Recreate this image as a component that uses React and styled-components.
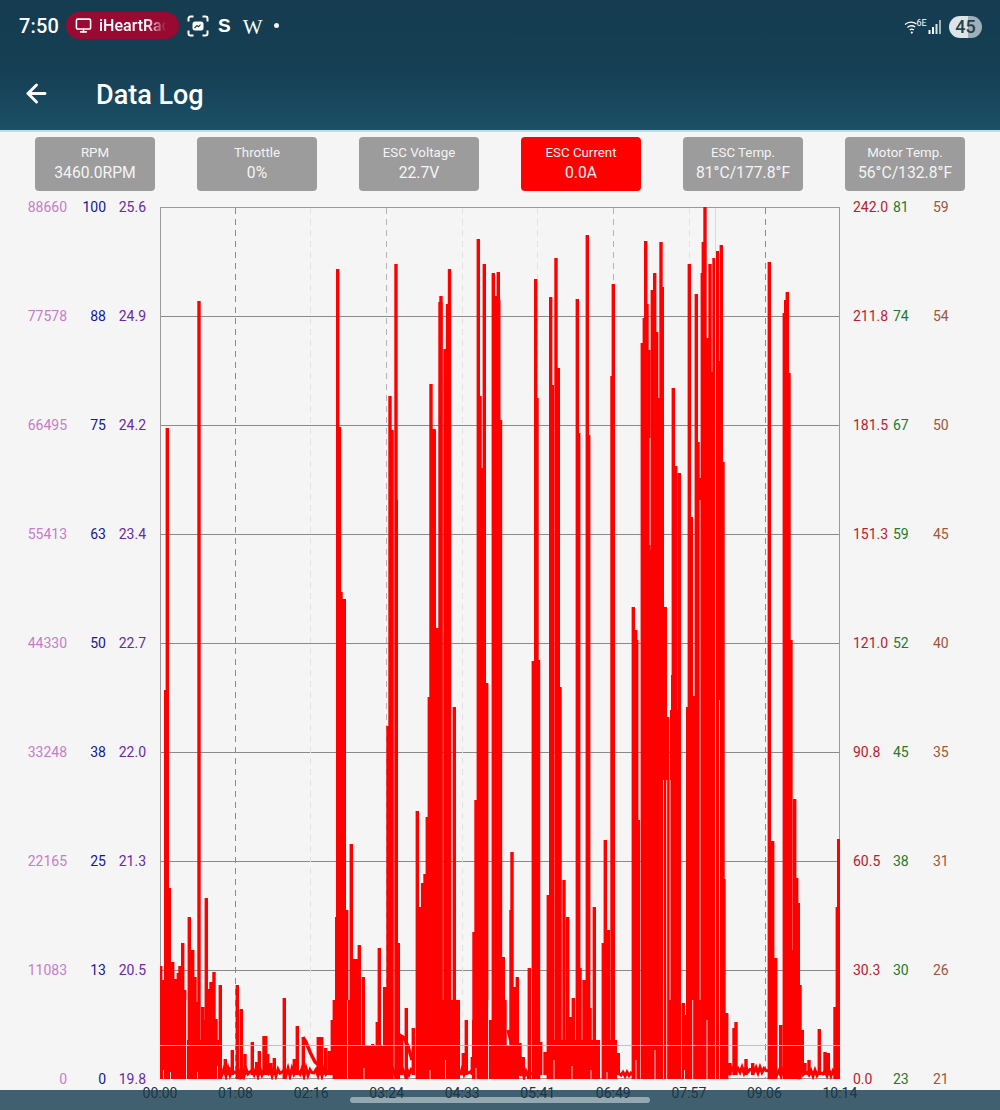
import React from 'react'
import styled, { createGlobalStyle } from 'styled-components'
import { ArrowLeft, Monitor } from 'lucide-react'

const GlobalStyle = createGlobalStyle`
  html, body {
    margin: 0;
    padding: 0;
    background: #f5f5f5;
  }
  * {
    box-sizing: border-box;
  }
`

const Page = styled.div`
  width: 1000px;
  height: 1110px;
  display: flex;
  flex-direction: column;
  overflow: hidden;
  background: #f5f5f5;
  font-family: Roboto, "Liberation Sans", sans-serif;
`

const Header = styled.header`
  height: 132px;
  flex: none;
  background: linear-gradient(180deg, #153c50 0%, #163f54 55%, #1b5066 100%);
  border-bottom: 2px solid #b9dfe8;
  color: #fff;
`

const StatusBar = styled.div`
  height: 52px;
  padding: 12px 18px 0 19px;
  display: flex;
  align-items: flex-start;
  justify-content: space-between;
`

const StatusLeft = styled.div`
  display: flex;
  align-items: center;
  height: 27px;
`

const StatusRight = styled.div`
  display: flex;
  align-items: center;
  height: 27px;
  margin-top: 1px;
`

const Clock = styled.span`
  font-size: 20px;
  font-weight: 500;
  width: 47px;
  letter-spacing: 0.2px;
`

const CallPill = styled.div`
  width: 113px;
  height: 27px;
  border-radius: 14px;
  background: #990a33;
  display: flex;
  align-items: center;
  padding-left: 9px;
  gap: 7px;
  font-size: 16px;
  font-weight: 500;
`

const PillText = styled.span`
  width: 67px;
  overflow: hidden;
  white-space: nowrap;
  -webkit-mask-image: linear-gradient(90deg, #000 72%, transparent 100%);
  mask-image: linear-gradient(90deg, #000 72%, transparent 100%);
`

const NoticeIcon = styled.svg`
  margin-left: 8px;
  display: block;
`

const NoticeLetter = styled.span`
  font-family: ${(p) => p.$family};
  font-size: ${(p) => p.$size}px;
  font-weight: ${(p) => p.$weight};
  margin-left: ${(p) => p.$gap}px;
  margin-top: ${(p) => p.$drop}px;
`

const NoticeDot = styled.span`
  width: 5px;
  height: 5px;
  border-radius: 50%;
  background: #eef3f5;
  margin-left: 11px;
`

const Battery = styled.div`
  width: 33px;
  height: 22px;
  border-radius: 11px;
  margin-left: 5px;
  background: linear-gradient(90deg, #dde4e7 0 58%, #9fb0b8 58% 100%);
  color: #24414f;
  font-size: 18px;
  font-weight: 500;
  line-height: 22px;
  text-align: center;
`

const AppBar = styled.div`
  height: 78px;
  display: flex;
  align-items: center;
  padding: 5px 0 0 22px;
`

const Title = styled.h1`
  margin: 2px 0 0 45px;
  font-size: 27px;
  font-weight: 500;
  line-height: 32px;
`

const MetricRow = styled.div`
  display: flex;
  justify-content: space-between;
  padding: 0 35px;
  margin-top: 5px;
  flex: none;
`

const Metric = styled.div`
  width: 120px;
  height: 54px;
  border-radius: 4px;
  background: ${(p) => (p.$active ? '#ff0000' : '#9c9c9c')};
  color: #f4f4f4;
  display: flex;
  flex-direction: column;
  align-items: center;
  padding-top: 7px;
`

const MetricLabel = styled.span`
  font-size: 13.3px;
  line-height: 18px;
`

const MetricValue = styled.span`
  font-size: 15.7px;
  line-height: 22px;
  white-space: nowrap;
`

const ChartRow = styled.div`
  display: flex;
  height: 872px;
  margin-top: 16px;
  flex: none;
`

const AxisGroup = styled.div`
  display: flex;
  width: ${(p) => p.$width}px;
  flex: none;
`

const Axis = styled.div`
  width: ${(p) => p.$width}px;
  flex: none;
  display: flex;
  flex-direction: column;
  justify-content: space-between;
  color: ${(p) => p.$color};
  font-size: 14px;
  text-align: ${(p) => p.$align};
`

const Tick = styled.span`
  display: block;
  height: 0;
  line-height: 0;
`

const ChartSvg = styled.svg`
  width: 680px;
  height: 873px;
  flex: none;
  display: block;
`

const TimeAxis = styled.div`
  width: 680px;
  height: 11px;
  margin-left: 160px;
  flex: none;
  display: flex;
  justify-content: space-between;
  position: relative;
  z-index: 1;
`

const TimeTick = styled.span`
  width: 0;
  height: 0;
  margin-top: 14px;
  display: flex;
  justify-content: center;
  line-height: 0;
  font-size: 14px;
  color: #1e3644;
`

const NavBar = styled.div`
  height: 20px;
  flex: none;
  background: #41606f;
  display: flex;
  justify-content: center;
  padding-top: 7px;
`

const NavHandle = styled.div`
  width: 300px;
  height: 6px;
  border-radius: 3px;
  background: #94a8b2;
`

const metrics = [
  { label: 'RPM', value: '3460.0RPM' },
  { label: 'Throttle', value: '0%' },
  { label: 'ESC Voltage', value: '22.7V' },
  { label: 'ESC Current', value: '0.0A', active: true },
  { label: 'ESC Temp.', value: '81°C/177.8°F' },
  { label: 'Motor Temp.', value: '56°C/132.8°F' },
]

const leftAxes = [
  { width: 67, color: '#c77ccb', ticks: ['88660', '77578', '66495', '55413', '44330', '33248', '22165', '11083', '0'] },
  { width: 39, color: '#17179a', ticks: ['100', '88', '75', '63', '50', '38', '25', '13', '0'] },
  { width: 40, color: '#6a2aa6', ticks: ['25.6', '24.9', '24.2', '23.4', '22.7', '22.0', '21.3', '20.5', '19.8'] },
]

const rightAxes = [
  { width: 40, color: '#b8202c', ticks: ['242.0', '211.8', '181.5', '151.3', '121.0', '90.8', '60.5', '30.3', '0.0'] },
  { width: 40, color: '#1f7a2c', ticks: ['81', '74', '67', '59', '52', '45', '38', '30', '23'] },
  { width: 40, color: '#a0563c', ticks: ['59', '54', '50', '45', '40', '35', '31', '26', '21'] },
]

const times = ['00:00', '01:08', '02:16', '03:24', '04:33', '05:41', '06:49', '07:57', '09:06', '10:14']

const gridYs = [316.5, 425.5, 534.5, 643.5, 752.5, 861.5, 970.5]

const dashed = [
  { x: 235.5, color: '#8a8a8a' },
  { x: 310.5, color: '#e2e2e2' },
  { x: 386.5, color: '#b4b4b4' },
  { x: 462.5, color: '#e2e2e2' },
  { x: 537.5, color: '#e2e2e2' },
  { x: 613.5, color: '#b4b4b4' },
  { x: 689.5, color: '#e2e2e2' },
  { x: 765.5, color: '#8a8a8a' },
]

// [x, top of the spike] in page pixels
const spikes = [
  [160.7, 966], [162.7, 980], [165.7, 690], [167.3, 428], [169.3, 888], [172.7, 962], [176, 979], [178.3, 973],
  [180, 966], [182.7, 943], [184.7, 990], [189.3, 917], [192.7, 950], [195, 977], [197.3, 1002], [199, 301],
  [202.7, 1007], [206.3, 898], [209, 989], [211, 982], [214, 972], [216, 1019], [220.3, 985], [225.3, 1059],
  [228.7, 1067], [232.3, 1050], [237.3, 985], [241.3, 1009], [245, 1054], [252.3, 1042], [256.7, 1062],
  [259.3, 1051], [264, 1036], [265.7, 1036], [267.7, 1054], [270.7, 1063], [274.3, 1058], [284.3, 998],
  [294.3, 1059], [297.3, 1026], [303.3, 1037], [318.3, 1037], [321.7, 1037], [325.7, 1048],
  [329.3, 1051], [332.3, 1020], [334.3, 1000], [336.7, 917], [337.7, 269], [339.5, 427], [341, 592], [344.3, 599],
  [346.7, 910], [351.3, 844], [354, 959], [356, 959], [359.3, 945], [363.3, 977], [369.3, 1050], [372.7, 1044],
  [377.3, 1022], [379.3, 948], [384.7, 987], [388, 726], [390, 396], [392, 430], [396, 264], [398.3, 943],
  [401.7, 1035], [406.3, 1008], [413.3, 1028], [417.3, 811], [420.7, 907], [422.7, 883], [425, 874], [427.3, 817],
  [429.3, 697], [431, 384], [434, 429], [436.7, 628], [440, 302], [441, 296], [445, 349], [447.5, 304], [449.5, 269],
  [454.3, 707], [457.3, 1018], [463.3, 1053], [466.3, 1020], [472.3, 1057], [474, 932], [476, 800], [478.3, 239],
  [480, 396], [482, 468], [484.3, 264], [486.7, 683], [493.3, 273], [495.7, 296], [498.3, 272], [500.5, 420],
  [503.3, 957], [505, 1000], [511, 910], [512, 852], [514, 987], [517.3, 977], [520, 1043], [523.3, 1057],
  [529.3, 968], [533.3, 661], [535.7, 279], [537, 398], [538.5, 660], [540.7, 1042], [545, 1052], [548.3, 895],
  [550.7, 297], [552.3, 385], [556, 258], [558.3, 368], [560, 687], [564, 880], [567.7, 917], [570.7, 1017],
  [573.3, 998], [577.3, 299], [578.7, 433], [580, 968], [584, 980], [587.3, 235], [588.7, 435], [590, 1008],
  [594.3, 907], [598.3, 1063], [603.3, 943], [605.3, 840], [608.3, 930], [612, 376], [613.3, 284], [615, 1048],
  [618.3, 1053], [633.3, 607], [635.7, 630], [636.7, 640], [642.3, 343], [644.3, 318], [645.7, 241], [647, 304],
  [648.7, 350], [652.3, 290], [654.7, 273], [656.7, 332], [658.7, 450], [660, 398], [661, 242], [662.3, 287],
  [665.3, 607], [667.7, 717], [668.7, 780], [672.7, 675], [673.3, 388], [675.7, 466], [677.7, 710], [679.3, 473],
  [683.3, 1003], [685, 1015], [689.3, 264], [691.3, 517], [693.7, 696], [696.3, 294], [698, 442], [699.3, 478],
  [702.3, 273], [703.3, 242], [705, 207], [707.7, 338], [710, 264], [712, 468], [714, 258], [717.3, 251], [719, 361],
  [721.3, 245], [723, 462], [724, 879], [726.7, 1013], [730, 1063], [734, 1028], [736, 1022], [746, 1059],
  [752.7, 1063], [769.3, 262], [772.7, 841], [775.7, 958], [780.7, 1025], [784.3, 313], [785.7, 300], [787.3, 292],
  [789, 373], [791, 640], [794.7, 799], [796.7, 878], [798.3, 903], [800, 985], [802.3, 1030], [805, 1063],
  [809, 1060], [819.3, 1029], [825, 1052], [828.3, 1053], [835, 1007], [837.3, 907], [838.7, 839],
]

// solid parts of the trace, where the line is too dense to tell apart: [from x, to x, top]
const blocks = [
  [160, 222, 1040], [161, 166, 1000], [168, 171, 950], [176, 186, 1000], [189, 196, 990], [203, 209, 1020],
  [337, 341, 590], [336, 346, 790], [335, 385, 1045], [346, 360, 1000], [387, 392, 726], [395, 398, 500],
  [417, 460, 1000], [427, 438, 817], [429, 437, 700], [431, 436, 430], [439, 442.5, 302], [444, 451, 349],
  [472, 500, 1020], [479, 486, 540], [492, 500.5, 300],
  [500, 515, 1045], [533, 540, 960], [534, 538, 400], [548, 600, 1040], [549.5, 553, 385], [555, 560, 368],
  [577, 580, 433], [586, 590, 435], [602, 617, 1040], [611, 615, 376],
  [632, 640, 990], [634, 640, 820], [641, 663, 550], [664, 669, 810], [670, 681, 710],
  [686, 700, 707], [701, 723, 372], [770, 775, 960], [784, 792, 880], [792, 798, 950],
]

// pale slits left between neighbouring strokes: [x, from y, to y]
const slits = [
  [163.5, 1070, 1079], [170.5, 1072, 1079], [186.5, 1000, 1079], [197.5, 1072, 1079], [217.5, 1066, 1079],
  [650, 438, 545], [663.5, 780, 1079], [666.7, 780, 1079], [670, 780, 1000], [692.7, 1000, 1079], [700, 500, 1000],
  [707, 1020, 1079], [719.5, 700, 1079], [636, 1060, 1079], [655, 1050, 1079], [684.5, 1070, 1079],
  [347.5, 1000, 1079], [445.5, 1060, 1079], [488.5, 1000, 1079], [364, 1068, 1079], [430, 1070, 1079],
  [476, 1068, 1079], [554, 1060, 1079], [572, 1066, 1079], [591, 1070, 1079], [607, 1072, 1079],
]

// stretches where the throttle idles: [from x, to x, mid y, swing]
const idleRanges = [
  [218, 332, 1072, 4], [383, 416, 1072, 3], [460, 476, 1072, 3], [520, 532, 1074, 3],
  [617, 633, 1074, 2], [724, 770, 1070, 3], [775, 836, 1073, 3],
]

const idlePoints = ([from, to, mid, swing]) => {
  const points = []
  for (let x = from; x <= to; x += 2) {
    points.push(`${x},${(mid + swing * Math.sin(x * 1.37)).toFixed(1)}`)
  }
  return points.join(' ')
}

// tails that decay after a burst
const tails = [
  '303,1037 306,1042 310,1052 315,1062 322,1068',
  '398,1034 404,1038 408,1046 412,1060',
  '508,1030 512,1045 518,1052 524,1068',
]

const tracePath = spikes
  .map(([x, top]) => `M${x} ${top}V${top < 1020 ? 1079 : 1075}`)
  .join('')

const ScreenshotIcon = () => (
  <NoticeIcon width="22" height="22" viewBox="0 0 22 22" fill="none" stroke="#fff" strokeWidth="2">
    <path d="M1.5 6.5V3.5a2 2 0 0 1 2-2h3M15.5 1.5h3a2 2 0 0 1 2 2v3M20.5 15.5v3a2 2 0 0 1-2 2h-3M6.5 20.5h-3a2 2 0 0 1-2-2v-3" />
    <rect x="5.5" y="6.5" width="11" height="9" rx="2.5" fill="#fff" stroke="none" />
    <path d="M7.5 13l2.5-2.5 1.5 1.2 2-2" stroke="#163f54" strokeWidth="1.2" />
  </NoticeIcon>
)

const WifiIcon = () => (
  <svg width="24" height="18" viewBox="0 0 24 18" fill="none" stroke="#fff" strokeWidth="1.3">
    <path d="M1 6.5c3.4-3 8.2-3 11.5-.4M3.4 9.4c2.4-2 5.4-2 7.8-.4M5.7 12c1.2-1 2.9-1 4.1 0" />
    <circle cx="7.8" cy="14.6" r="1.1" fill="#fff" stroke="none" />
    <text x="12.5" y="8" fontFamily="Roboto, sans-serif" fontSize="9" fill="#fff" stroke="none">6E</text>
  </svg>
)

const SignalIcon = () => (
  <svg width="16" height="16" viewBox="0 0 16 16" fill="#fff">
    <rect x="0.5" y="11" width="2" height="4" />
    <rect x="4" y="8" width="2" height="7" />
    <rect x="7.5" y="5" width="2" height="10" opacity="0.85" />
    <rect x="11" y="1" width="2" height="14" opacity="0.6" />
  </svg>
)

const Chart = () => (
  <ChartSvg viewBox="160 207 680 873">
    {gridYs.map((y) => (
      <line key={y} x1="160" x2="840" y1={y} y2={y} stroke="#8a8a8a" strokeWidth="1" />
    ))}
    {dashed.map((d) => (
      <line key={d.x} x1={d.x} x2={d.x} y1="208" y2="1079" stroke={d.color} strokeWidth="1" strokeDasharray="6 5" />
    ))}
    <line x1="160" x2="840" y1="1078.5" y2="1078.5" stroke="#9a9a9a" strokeWidth="1" />
    <rect x="160.5" y="207.5" width="679" height="871" fill="none" stroke="#9a9a9a" strokeWidth="1" />
    <path d={tracePath} fill="none" stroke="#ff0000" strokeWidth="3.4" />
    {blocks.map(([x1, x2, top]) => (
      <rect key={`${x1}-${top}`} x={x1} y={top} width={x2 - x1} height={1079 - top} fill="#ff0000" />
    ))}
    {idleRanges.map((r) => (
      <polyline key={r[0]} points={idlePoints(r)} fill="none" stroke="#ff0000" strokeWidth="3" />
    ))}
    {tails.map((t) => (
      <polyline key={t} points={t} fill="none" stroke="#ff0000" strokeWidth="3.4" />
    ))}
    {slits.map(([x, y1, y2]) => (
      <line key={`${x}-${y1}`} x1={x} x2={x} y1={y1} y2={y2} stroke="#f8cfc8" strokeWidth="1" />
    ))}
    <line x1="160" x2="840" y1="1045.5" y2="1045.5" stroke="#f4b878" strokeWidth="1" />
    <line x1="715.5" x2="715.5" y1="208" y2="1079" stroke="#f6d8a8" strokeWidth="1" />
  </ChartSvg>
)

const AxisColumn = ({ axis, align }) => (
  <Axis $width={axis.width} $color={axis.color} $align={align}>
    {axis.ticks.map((t, i) => (
      <Tick key={i}>{t}</Tick>
    ))}
  </Axis>
)

export default function App() {
  return (
    <Page>
      <GlobalStyle />
      <Header>
        <StatusBar>
          <StatusLeft>
            <Clock>7:50</Clock>
            <CallPill>
              <Monitor size={17} strokeWidth={2.2} />
              <PillText>iHeartRadio</PillText>
            </CallPill>
            <ScreenshotIcon />
            <NoticeLetter $family={'"Liberation Sans", sans-serif'} $size={19} $weight={700} $gap={9} $drop={0}>S</NoticeLetter>
            <NoticeLetter $family={'"Liberation Serif", serif'} $size={21} $weight={400} $gap={12} $drop={3}>W</NoticeLetter>
            <NoticeDot />
          </StatusLeft>
          <StatusRight>
            <WifiIcon />
            <SignalIcon />
            <Battery>45</Battery>
          </StatusRight>
        </StatusBar>
        <AppBar>
          <ArrowLeft size={29} strokeWidth={2.4} />
          <Title>Data Log</Title>
        </AppBar>
      </Header>
      <MetricRow>
        {metrics.map((m) => (
          <Metric key={m.label} $active={m.active}>
            <MetricLabel>{m.label}</MetricLabel>
            <MetricValue>{m.value}</MetricValue>
          </Metric>
        ))}
      </MetricRow>
      <ChartRow>
        <AxisGroup $width={160}>
          {leftAxes.map((a) => (
            <AxisColumn key={a.color} axis={a} align="right" />
          ))}
        </AxisGroup>
        <Chart />
        <AxisGroup $width={160}>
          <Axis $width={13} />
          {rightAxes.map((a) => (
            <AxisColumn key={a.color} axis={a} align="left" />
          ))}
        </AxisGroup>
      </ChartRow>
      <TimeAxis>
        {times.map((t) => (
          <TimeTick key={t}>{t}</TimeTick>
        ))}
      </TimeAxis>
      <NavBar>
        <NavHandle />
      </NavBar>
    </Page>
  )
}
